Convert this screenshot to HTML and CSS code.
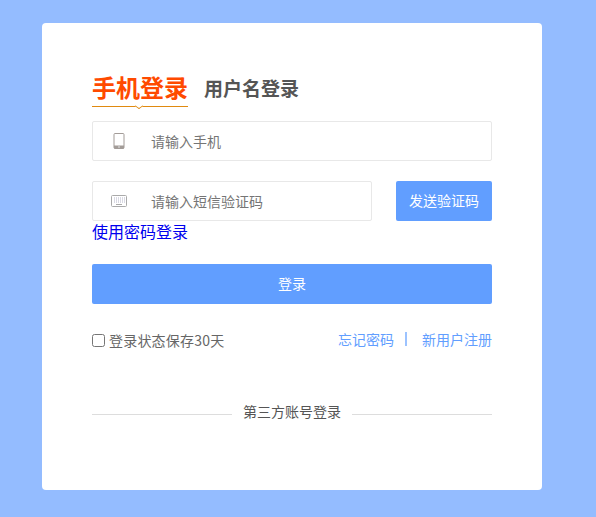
FILE: index.html
```html
<!doctype html>
<html>
<head>
	<title>登录</title>
	<link rel="stylesheet" href="styles.css">
</head>
<body>
	<div class="card">
		<div class="tabs">
			<a class="tab active">手机登录</a>
			<a class="tab">用户名登录</a>
		</div>

		<div class="field">
			<span class="field-icon">
				<svg width="12" height="16" viewBox="0 0 12 16">
					<rect x="1" y="0.5" width="10" height="15" rx="1" fill="#fff" stroke="#a39c98"/>
					<rect x="1" y="12.5" width="10" height="3" fill="#a39c98"/>
					<rect x="5" y="13.5" width="2" height="1" fill="#e4e4e4"/>
				</svg>
			</span>
			<span class="placeholder">请输入手机</span>
		</div>

		<div class="code-row">
			<div class="field code-field">
				<span class="field-icon">
					<svg width="16" height="12" viewBox="0 0 16 12">
						<rect x="0.5" y="0.5" width="15" height="11" rx="1" fill="#fff" stroke="#aaa"/>
						<path d="M3 3h1M5 3h1M7 3h1M9 3h1M11 3h1M13 3h1M3 5h1M5 5h1M7 5h1M9 5h1M11 5h1M13 5h1M3 7h1M5 7h1M7 7h1M9 7h1M11 7h1M13 7h1" stroke="#b4b4c8" fill="none"/>
						<path d="M5 9.5h6" stroke="#aaa" fill="none"/>
					</svg>
				</span>
				<span class="placeholder">请输入短信验证码</span>
			</div>
			<button class="btn send-btn">发送验证码</button>
		</div>
		<a class="pwd-link" href="#">使用密码登录</a>

		<button class="btn login-btn">登录</button>

		<div class="options">
			<label class="remember"><input type="checkbox">登录状态保存30天</label>
			<div class="links">
				<a href="#">忘记密码</a>
				<i class="sep"></i>
				<a href="#">新用户注册</a>
			</div>
		</div>

		<div class="third">
			<span class="line"></span>
			<span class="third-text">第三方账号登录</span>
			<span class="line"></span>
		</div>
	</div>
</body>
</html>
```

FILE: styles.css
```css
html, body {
	margin: 0;
	height: 100%;
}

body {
	background: #94bcff;
	font-family: "Noto Sans CJK SC", "Liberation Sans", sans-serif;
	overflow: hidden;
}

a {
	text-decoration: none;
}

.card {
	box-sizing: border-box;
	width: 500px;
	height: 467px;
	margin: 23px 0 0 42px;
	padding: 46px 50px 0;
	background: #fff;
	border-radius: 4px;
}

.tabs {
	display: flex;
	align-items: flex-start;
	gap: 16px;
	height: 39px;
	margin-bottom: 13px;
}

.tab {
	font-size: 19px;
	font-weight: bold;
	line-height: 38px;
	color: #555;
}

.tab.active {
	position: relative;
	height: 37px;
	font-size: 24px;
	line-height: 36px;
	color: #ff4a00;
	border-bottom: 1px solid #e08a10;
}

.tab.active::after {
	content: "";
	position: absolute;
	left: 44px;
	bottom: -3px;
	width: 5px;
	height: 5px;
	background: #fff;
	border-right: 1px solid #e08a10;
	border-bottom: 1px solid #e08a10;
	transform: scale(1, 0.7) rotate(45deg);
}

.field {
	box-sizing: border-box;
	display: flex;
	align-items: center;
	height: 40px;
	border: 1px solid #e8e8e8;
	border-radius: 2px;
}

.field-icon {
	display: flex;
	justify-content: center;
	width: 52px;
	margin-right: 7px;
}

.field .placeholder {
	margin-left: -1px;
	font-size: 14px;
	color: #757575;
}

.code-row {
	display: flex;
	justify-content: space-between;
	margin-top: 20px;
}

.code-field {
	width: 280px;
}

.btn {
	display: block;
	padding: 0 0 2px;
	height: 40px;
	border: 0;
	border-radius: 2px;
	background: #619eff;
	color: #fff;
	font-family: inherit;
	font-size: 14px;
}

.send-btn {
	width: 96px;
}

.pwd-link {
	display: block;
	height: 24px;
	font-size: 16px;
	line-height: 20px;
	color: #00e;
}

.login-btn {
	width: 400px;
	margin-top: 19px;
}

.options {
	display: flex;
	justify-content: space-between;
	align-items: center;
	height: 20px;
	margin-top: 26px;
	font-size: 14px;
}

.remember {
	display: flex;
	align-items: center;
	letter-spacing: 0.2px;
	color: #666;
}

.remember input {
	width: 13px;
	height: 13px;
	margin: 0 4px 0 0;
}

.links {
	display: flex;
	align-items: center;
	margin-top: -2px;
}

.links a {
	color: #619eff;
}

.sep {
	width: 2px;
	height: 14px;
	margin: 0 15px 0 11px;
	background: #9cc3ff;
}

.third {
	display: flex;
	align-items: center;
	justify-content: space-between;
	margin-top: 51px;
	font-size: 14px;
	color: #555;
}

.line {
	width: 140px;
	height: 1px;
	margin-top: 6px;
	background: #ddd;
}
```
